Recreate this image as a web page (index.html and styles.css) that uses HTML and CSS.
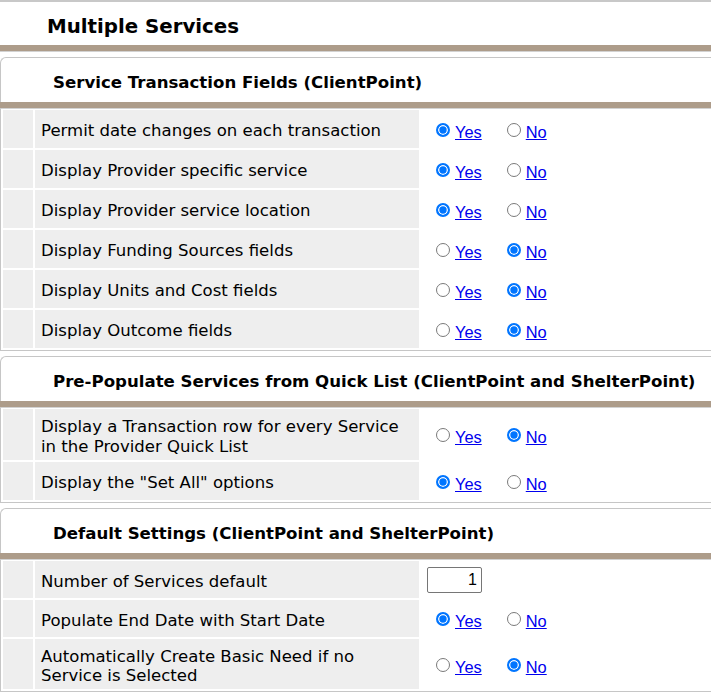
FILE: index.html
```html
<!DOCTYPE html>
<html>
<head>
<meta charset="utf-8">
<title>Multiple Services</title>
<link rel="stylesheet" href="styles.css">
</head>
<body>
<div class="page">
  <div class="title">Multiple Services</div>
  <div class="bar main-bar"></div>

  <section class="sec">
    <div class="sec-head">Service Transaction Fields (ClientPoint)</div>
    <div class="bar"></div>
    <div class="rows">
      <div class="row"><div class="c0"></div><div class="lbl">Permit date changes on each transaction</div><div class="val"><span class="opt"><input type="radio" name="r1" checked><a href="#">Yes</a></span><span class="opt"><input type="radio" name="r1"><a href="#">No</a></span></div></div>
      <div class="row"><div class="c0"></div><div class="lbl">Display Provider specific service</div><div class="val"><span class="opt"><input type="radio" name="r2" checked><a href="#">Yes</a></span><span class="opt"><input type="radio" name="r2"><a href="#">No</a></span></div></div>
      <div class="row"><div class="c0"></div><div class="lbl">Display Provider service location</div><div class="val"><span class="opt"><input type="radio" name="r3" checked><a href="#">Yes</a></span><span class="opt"><input type="radio" name="r3"><a href="#">No</a></span></div></div>
      <div class="row"><div class="c0"></div><div class="lbl">Display Funding Sources fields</div><div class="val"><span class="opt"><input type="radio" name="r4"><a href="#">Yes</a></span><span class="opt"><input type="radio" name="r4" checked><a href="#">No</a></span></div></div>
      <div class="row"><div class="c0"></div><div class="lbl">Display Units and Cost fields</div><div class="val"><span class="opt"><input type="radio" name="r5"><a href="#">Yes</a></span><span class="opt"><input type="radio" name="r5" checked><a href="#">No</a></span></div></div>
      <div class="row"><div class="c0"></div><div class="lbl">Display Outcome fields</div><div class="val"><span class="opt"><input type="radio" name="r6"><a href="#">Yes</a></span><span class="opt"><input type="radio" name="r6" checked><a href="#">No</a></span></div></div>
    </div>
  </section>

  <section class="sec">
    <div class="sec-head">Pre-Populate Services from Quick List (ClientPoint and ShelterPoint)</div>
    <div class="bar"></div>
    <div class="rows">
      <div class="row"><div class="c0"></div><div class="lbl">Display a Transaction row for every Service in the Provider Quick List</div><div class="val"><span class="opt"><input type="radio" name="r7"><a href="#">Yes</a></span><span class="opt"><input type="radio" name="r7" checked><a href="#">No</a></span></div></div>
      <div class="row"><div class="c0"></div><div class="lbl">Display the "Set All" options</div><div class="val"><span class="opt"><input type="radio" name="r8" checked><a href="#">Yes</a></span><span class="opt"><input type="radio" name="r8"><a href="#">No</a></span></div></div>
    </div>
  </section>

  <section class="sec">
    <div class="sec-head">Default Settings (ClientPoint and ShelterPoint)</div>
    <div class="bar"></div>
    <div class="rows rows-tight">
      <div class="row"><div class="c0"></div><div class="lbl">Number of Services default</div><div class="val"><input class="num" type="text" value="1"></div></div>
      <div class="row"><div class="c0"></div><div class="lbl">Populate End Date with Start Date</div><div class="val"><span class="opt"><input type="radio" name="r9" checked><a href="#">Yes</a></span><span class="opt"><input type="radio" name="r9"><a href="#">No</a></span></div></div>
      <div class="row"><div class="c0"></div><div class="lbl">Automatically Create Basic Need if no Service is Selected</div><div class="val"><span class="opt"><input type="radio" name="r10"><a href="#">Yes</a></span><span class="opt"><input type="radio" name="r10" checked><a href="#">No</a></span></div></div>
    </div>
  </section>
</div>
</body>
</html>
```

FILE: styles.css
```css
html, body {
  margin: 0;
  padding: 0;
  overflow: hidden;
  background: #ffffff;
}

body {
  font-family: "DejaVu Sans", Verdana, sans-serif;
  color: #000000;
}

.page {
  width: 900px;
  border-top: 2px solid #c8c8c8;
}

.title {
  height: 43px;
  box-sizing: border-box;
  padding: 13px 0 0 47px;
  font-size: 19.8px;
  font-weight: bold;
  line-height: 24px;
}

.bar {
  height: 6px;
  background: #ad9c8a;
}

.main-bar {
  border-bottom: 1px solid #d2d2d2;
}

.sec {
  margin-top: 5px;
}

.sec-head {
  height: 40px;
  padding-top: 4px;
  border-top: 1px solid #c6c6c6;
  border-left: 1px solid #c6c6c6;
  border-top-left-radius: 6px;
  padding-left: 52px;
  display: flex;
  align-items: center;
  font-size: 16.6px;
  font-weight: bold;
}

.rows {
  border: 1px solid #c6c6c6;
  border-top-color: #d2d2d2;
  padding: 1px 2px 2px 2px;
  display: flex;
  flex-direction: column;
  gap: 2px;
}

.row {
  display: flex;
  gap: 2px;
  min-height: 38px;
}

.rows-tight .row {
  min-height: 37px;
}

.c0 {
  width: 30px;
  flex: none;
  background: #eeeeee;
}

.lbl {
  width: 384px;
  flex: none;
  box-sizing: border-box;
  background: #eeeeee;
  padding: 8px 6px 4px 6px;
  display: flex;
  align-items: center;
  font-size: 16.55px;
  line-height: 19.5px;
}

.rows-tight .lbl {
  line-height: 19px;
}

.val {
  flex: 1;
  display: flex;
  align-items: center;
  padding-left: 15px;
  font-family: "Liberation Sans", Arial, sans-serif;
  font-size: 16.4px;
}

.opt {
  display: inline-flex;
  align-items: flex-start;
  margin-top: 6px;
  line-height: 18.4px;
}

.opt + .opt {
  margin-left: 25px;
}

.opt input {
  -webkit-appearance: none;
  appearance: none;
  margin: 0 5px 0 0;
  width: 14px;
  height: 14px;
  box-sizing: border-box;
  border: 1px solid #7a7a7a;
  border-radius: 50%;
  background: #ffffff;
}

.opt input:checked {
  border: 2px solid #0075ff;
  background: #0075ff;
  box-shadow: inset 0 0 0 1.3px #ffffff;
}

.opt a {
  color: #0000ee;
  text-decoration: underline;
}

.num {
  margin-left: -9px;
  width: 55px;
  height: 26px;
  box-sizing: border-box;
  border: 1px solid #767676;
  border-radius: 2px;
  padding: 0 4px;
  text-align: right;
  font-family: "Liberation Sans", Arial, sans-serif;
  font-size: 16px;
}
```
